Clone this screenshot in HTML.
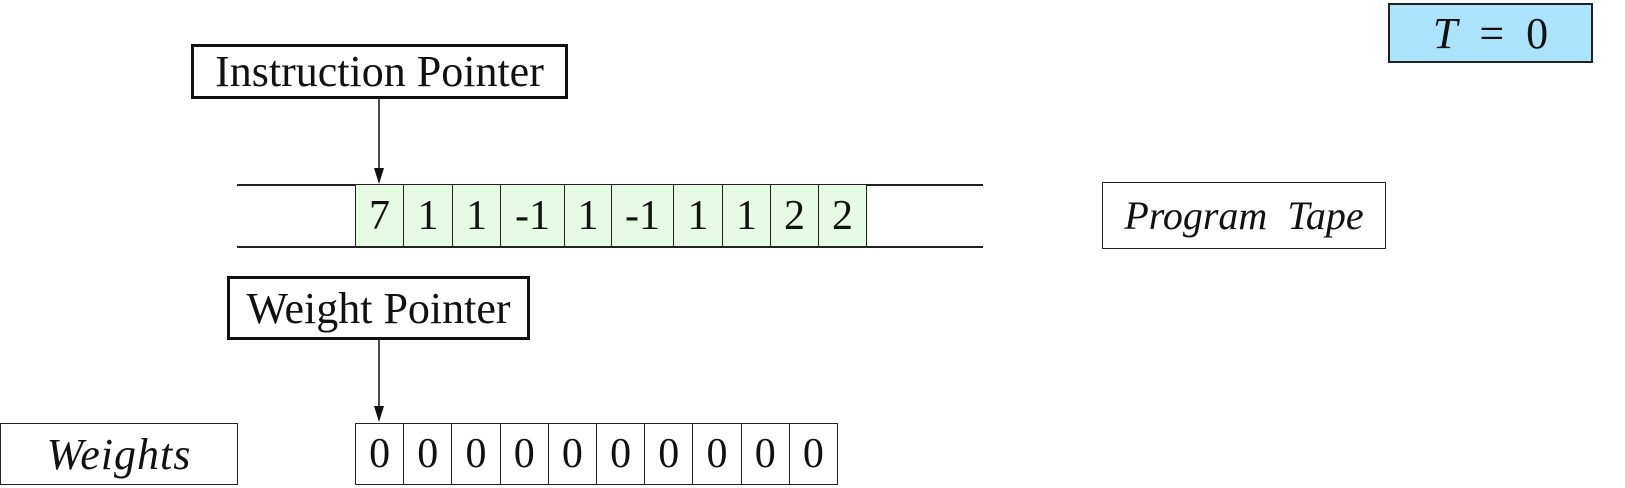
<!DOCTYPE html>
<html><head><meta charset="utf-8"><style>
body{margin:0;width:1625px;height:488px;background:#fff;position:relative;overflow:hidden;font-family:"Liberation Serif",serif;color:#111}
.b{position:absolute;box-sizing:border-box;display:flex;align-items:center;justify-content:center;font-size:44px;white-space:nowrap}
.c{position:absolute;box-sizing:border-box;border:1.5px solid #222;display:flex;align-items:center;justify-content:center;font-size:42px}
.l{position:absolute;background:#222}
</style></head><body>
<div class="b" style="left:191px;top:44px;width:377px;height:55px;border:3px solid #111">Instruction Pointer</div>
<div class="b" style="left:227px;top:276px;width:303px;height:64px;border:3px solid #111">Weight Pointer</div>
<div class="b" style="left:1102px;top:182px;width:284px;height:67px;border:1.5px solid #222;font-style:italic;font-size:40px">Program&nbsp; Tape</div>
<div class="b" style="left:0px;top:423px;width:238px;height:62px;border:1.5px solid #222;font-style:italic;letter-spacing:1px">Weights</div>
<div class="b" style="left:1388px;top:3px;width:205px;height:60px;border:2px solid #222;background:#abe3fb"><i>T</i>&nbsp;&nbsp;=&nbsp;&nbsp;0</div>

<div class="l" style="left:237px;top:184px;width:746px;height:1.5px"></div>
<div class="l" style="left:237px;top:246px;width:746px;height:1.5px"></div>

<div class="c" style="left:355px;top:184px;width:49px;height:63px;background:#e5fbe3">7</div>
<div class="c" style="left:403px;top:184px;width:50px;height:63px;background:#e5fbe3">1</div>
<div class="c" style="left:452px;top:184px;width:49px;height:63px;background:#e5fbe3">1</div>
<div class="c" style="left:500px;top:184px;width:65px;height:63px;background:#e5fbe3">-1</div>
<div class="c" style="left:564px;top:184px;width:48px;height:63px;background:#e5fbe3">1</div>
<div class="c" style="left:611px;top:184px;width:63px;height:63px;background:#e5fbe3">-1</div>
<div class="c" style="left:673px;top:184px;width:50px;height:63px;background:#e5fbe3">1</div>
<div class="c" style="left:722px;top:184px;width:49px;height:63px;background:#e5fbe3">1</div>
<div class="c" style="left:770px;top:184px;width:49px;height:63px;background:#e5fbe3">2</div>
<div class="c" style="left:818px;top:184px;width:49px;height:63px;background:#e5fbe3">2</div>

<div class="c" style="left:355px;top:423px;width:49.2px;height:62px">0</div>
<div class="c" style="left:403.2px;top:423px;width:49.2px;height:62px">0</div>
<div class="c" style="left:451.4px;top:423px;width:49.2px;height:62px">0</div>
<div class="c" style="left:499.6px;top:423px;width:49.2px;height:62px">0</div>
<div class="c" style="left:547.8px;top:423px;width:49.2px;height:62px">0</div>
<div class="c" style="left:596px;top:423px;width:49.2px;height:62px">0</div>
<div class="c" style="left:644.2px;top:423px;width:49.2px;height:62px">0</div>
<div class="c" style="left:692.4px;top:423px;width:49.2px;height:62px">0</div>
<div class="c" style="left:740.6px;top:423px;width:49.2px;height:62px">0</div>
<div class="c" style="left:788.8px;top:423px;width:49.2px;height:62px">0</div>

<svg style="position:absolute;left:0;top:0" width="1625" height="488">
<line x1="379" y1="99" x2="379" y2="170" stroke="#111" stroke-width="1.5"/>
<polygon points="374,168 384,168 379,184" fill="#111"/>
<line x1="379" y1="340" x2="379" y2="408" stroke="#111" stroke-width="1.5"/>
<polygon points="374,406 384,406 379,422" fill="#111"/>
</svg>
</body></html>
